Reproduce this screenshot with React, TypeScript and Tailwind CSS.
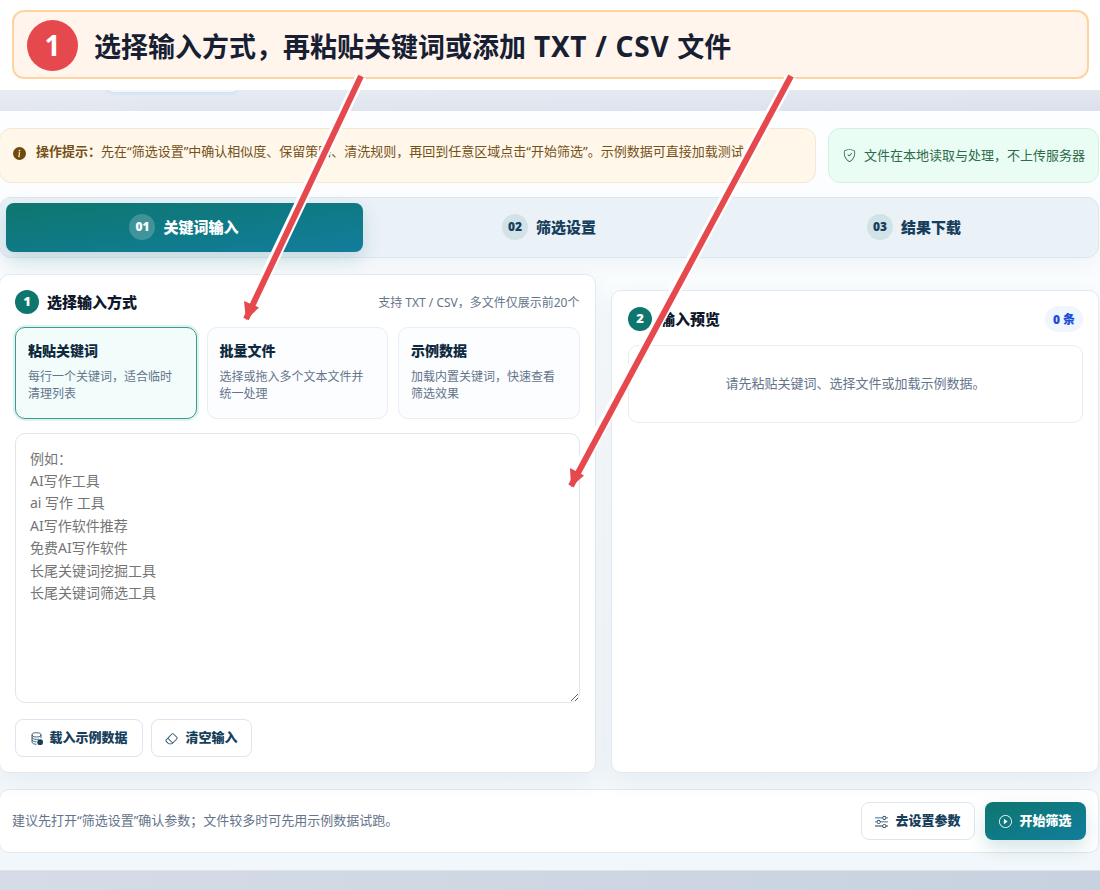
import React from "react";
import {
  BsInfoCircleFill,
  BsShieldCheck,
  BsEraser,
  BsSliders,
  BsPlayCircle,
} from "react-icons/bs";

const tabs = [
  { no: "01", label: "关键词输入", active: true },
  { no: "02", label: "筛选设置", active: false },
  { no: "03", label: "结果下载", active: false },
];

const modes = [
  { title: "粘贴关键词", desc: "每行一个关键词，适合临时清理列表", active: true },
  { title: "批量文件", desc: "选择或拖入多个文本文件并统一处理", active: false },
  { title: "示例数据", desc: "加载内置关键词，快速查看筛选效果", active: false },
];

const placeholder = [
  "例如：",
  "AI写作工具",
  "ai 写作 工具",
  "AI写作软件推荐",
  "免费AI写作软件",
  "长尾关键词挖掘工具",
  "长尾关键词筛选工具",
].join("\n");

function Banner() {
  return (
    <header className="h-[90px] bg-white pl-3 pr-[11px] pt-[10px]">
      <div className="flex h-[69px] items-center rounded-[12px] border-2 border-[#ffd3a0] bg-[#fff5ec] pl-[13px] pt-[2px]">
        <span className="flex size-[51px] items-center justify-center rounded-full bg-[#e5484d] pb-[2px] text-[28px] font-bold text-white">
          1
        </span>
        <h1 className="ml-4 whitespace-nowrap pt-px text-[27px] font-bold leading-none text-[#172033]">
          选择输入方式，再粘贴关键词或添加
          <span className="text-[28px] leading-none tracking-[0.72px]"> TXT / CSV </span>
          文件
        </h1>
      </div>
    </header>
  );
}

function StepBadge({ n }: { n: number }) {
  return (
    <span className="flex size-6 items-center justify-center rounded-full bg-[#0f766e] text-[13px] font-black text-white">
      {n}
    </span>
  );
}

function DatabaseIcon() {
  return (
    <svg className="size-[13px]" viewBox="0 0 16 16" fill="none" stroke="currentColor">
      <ellipse cx="8" cy="3.500" rx="5.500" ry="2.600" />
      <path d="M2.500 3.500v9c0 1.400 2.400 2.600 5.500 2.600M13.500 3.500v4M2.500 6.500c0 1.400 2.400 2.600 5.500 2.600 1 0 2-.1 2.800-.4M2.500 9.500c0 1.400 2.400 2.600 5.500 2.600" />
      <circle cx="12.500" cy="12.500" r="3.500" fill="currentColor" stroke="none" />
    </svg>
  );
}

function Arrows() {
  return (
    <svg className="pointer-events-none absolute left-0 top-0" width="1100" height="890" viewBox="0 0 1100 890">
      <g stroke="#fff" strokeWidth="11">
        <path d="M361 76 249 311" />
        <path d="M791 76 574 478" />
      </g>
      <g stroke="#e5484d" strokeWidth="6">
        <path d="M361 76 246 319" />
        <path d="M791 76 571 486" />
      </g>
      <g fill="#e5484d">
        <path d="M244 301 259 307.500 246 320Z" />
        <path d="M570 468 584 475.500 571 487Z" />
      </g>
    </svg>
  );
}

export default function App() {
  return (
    <div className="relative h-[890px] w-[1100px] overflow-hidden bg-white font-['Noto_Sans','Noto_Sans_CJK_SC',sans-serif] text-[13px] text-[#0f172a]">
      <Banner />
      <div className="h-[21px] overflow-hidden bg-linear-to-br from-[#e9ecf3] to-[#dbe1ec]">
        <div className="-mt-3 ml-[106px] h-[14px] w-[133px] rounded-b-lg bg-[#f3f8ff] shadow-[0_1px_4px_#c7dcf8]" />
      </div>

      <main className="h-[760px] border-b border-[#dce5ee] bg-linear-to-b from-[#fcfeff] to-[#f2f7fb] pt-[17px]">
        <div className="-ml-px mr-px">
          <div className="flex h-[55px] gap-3">
            <div className="flex w-[817px] items-start rounded-[12px] border border-[#f5e7d0] bg-[#fff8ea] pl-[13px] pt-[13px] leading-[21px] text-[#765018]">
              <BsInfoCircleFill className="mt-[5px] size-[13px] text-[#70490b]" />
              <p className="-mt-px ml-[10px] whitespace-nowrap">
                <strong className="font-bold">操作提示：</strong>
                先在“筛选设置”中确认相似度、保留策略、清洗规则，再回到任意区域点击“开始筛选”。示例数据可直接加载测试。
              </p>
            </div>
            <div className="flex flex-1 items-center whitespace-nowrap rounded-[12px] border border-[#d2f2e1] bg-[#eafdf4] pl-[14px] text-[#2f6a4a]">
              <BsShieldCheck className="size-[13px]" />
              <span className="ml-2">文件在本地读取与处理，不上传服务器</span>
            </div>
          </div>

          <nav className="mt-[13.5px] grid h-[61.5px] grid-cols-3 gap-2 rounded-[12px] border border-[#dce6ef] bg-[#eaf1f7] px-[5.500px] py-[5.500px] shadow-[0_8px_20px_rgba(15,60,90,0.04)]">
            {tabs.map((t) => (
              <button
                key={t.no}
                className={
                  t.active
                    ? "flex items-center justify-center gap-2 rounded-lg bg-linear-to-br from-[#0f766e] to-[#127d9c] pb-px text-[15px] font-black text-white shadow-[0_8px_18px_rgba(15,118,110,0.18)]"
                    : "flex items-center justify-center gap-2 rounded-lg pb-px text-[15px] font-black text-[#173f5c]"
                }
              >
                <span
                  className={
                    t.active
                      ? "flex size-[26px] items-center justify-center rounded-full bg-white/20 text-xs"
                      : "flex size-[26px] items-center justify-center rounded-full bg-[#d1e3e6] text-xs"
                  }
                >
                  {t.no}
                </span>
                {t.label}
              </button>
            ))}
          </nav>

          <div className="mt-4 grid grid-cols-[596.500px_1fr] gap-x-[15.500px]">
            <section className="h-[499px] rounded-[10px] border border-[#e2e9f1] bg-white px-[15px] pt-[15px] shadow-[0_8px_24px_rgba(15,50,90,0.06)]">
              <div className="flex h-6 items-center">
                <StepBadge n={1} />
                <h2 className="ml-2 text-[15px] font-black">选择输入方式</h2>
                <span className="ml-auto pt-px text-xs text-[#64748b]">支持 TXT / CSV，多文件仅展示前20个</span>
              </div>
              <div className="mt-[13px] grid h-[92px] grid-cols-3 gap-[10px]">
                {modes.map((m) => (
                  <button
                    key={m.title}
                    className={
                      m.active
                        ? "flex flex-col rounded-[10px] border border-[#3f998e] bg-[#f1fcfb] px-3 pt-[13px] text-left shadow-[0_0_0_2px_#dff2ef]"
                        : "flex flex-col rounded-[10px] border border-[#e8eef4] bg-[#fbfdff] px-3 pt-[13px] text-left"
                    }
                  >
                    <strong className="text-sm font-black leading-5 text-[#0f2a3f]">{m.title}</strong>
                    <span className="mt-[7px] text-xs leading-[17px] text-[#64748b]">{m.desc}</span>
                  </button>
                ))}
              </div>
              <textarea
                placeholder={placeholder}
                className="mt-[14px] block h-[270px] w-full rounded-[10px] border border-[#dfe5ec] bg-white px-[14px] pt-[13.500px] text-sm leading-[22.4px] placeholder:text-[#757575]"
              />
              <div className="mt-4 flex gap-2">
                <button className="flex h-[38px] w-32 items-center justify-center gap-[6px] rounded-lg border border-[#dce6f0] font-black text-[#173f5c]">
                  <DatabaseIcon />
                  载入示例数据
                </button>
                <button className="flex h-[38px] w-[101px] items-center justify-center gap-[7px] rounded-lg border border-[#dce6f0] font-black text-[#173f5c]">
                  <BsEraser className="size-[13px]" />
                  清空输入
                </button>
              </div>
            </section>

            <section className="mt-4 h-[483px] rounded-[10px] border border-[#e2e9f1] bg-white pl-4 pr-[15px] pt-[15px] shadow-[0_8px_24px_rgba(15,50,90,0.06)]">
              <div className="flex h-[26px] items-center">
                <StepBadge n={2} />
                <h2 className="ml-2 text-[15px] font-black">输入预览</h2>
                <span className="ml-auto flex h-[26px] w-[38px] items-center justify-center rounded-full bg-[#eff6ff] pt-px text-xs font-black text-[#1d4ed8]">
                  0 条
                </span>
              </div>
              <div className="mt-[13px] flex h-[78px] items-center justify-center rounded-[10px] border border-[#e8edf2] text-[#64748b]">
                请先粘贴关键词、选择文件或加载示例数据。
              </div>
            </section>
          </div>

          <footer className="mt-4 flex h-[64px] items-center rounded-[10px] border border-[#e0e9f1] bg-white pl-3 pr-3">
            <p className="text-[#64748b]">建议先打开“筛选设置”确认参数；文件较多时可先用示例数据试跑。</p>
            <button className="ml-auto flex h-[38px] w-[114px] items-center justify-center gap-[7px] rounded-lg border border-[#dce6f0] font-black text-[#173f5c]">
              <BsSliders className="size-[13px]" />
              去设置参数
            </button>
            <button className="ml-[10px] flex h-[38px] w-[101px] items-center justify-center gap-[7px] rounded-lg bg-linear-to-br from-[#0f766e] to-[#127d9c] font-black text-white shadow-[0_8px_18px_rgba(15,118,110,0.18)]">
              <BsPlayCircle className="size-[13px]" />
              开始筛选
            </button>
          </footer>
        </div>
      </main>
      <div className="h-[19px] bg-linear-to-r from-[#d5dce7] to-[#c8d1df]" />
      <Arrows />
    </div>
  );
}
